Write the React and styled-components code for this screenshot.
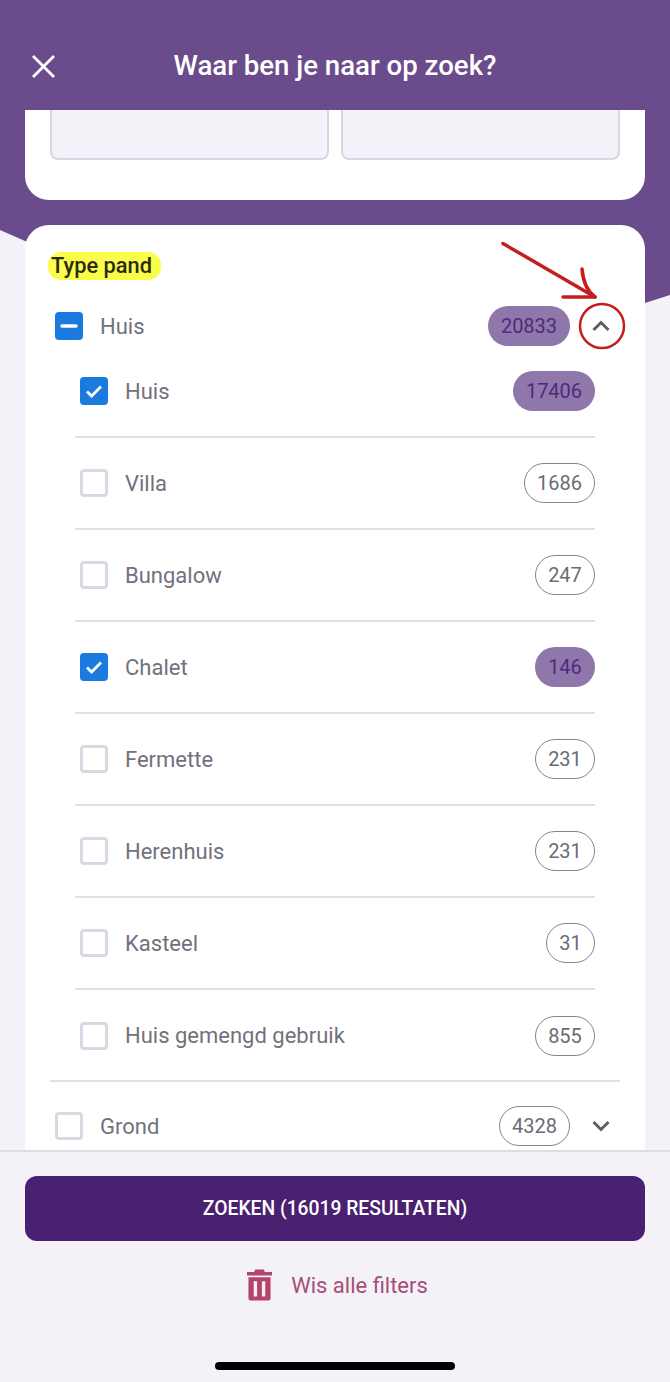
import React from "react";
import styled, { createGlobalStyle } from "styled-components";

const GlobalStyle = createGlobalStyle`
  html, body {
    margin: 0;
    padding: 0;
    background: #f4f1f8;
  }
  * {
    box-sizing: border-box;
  }
`;

const Screen = styled.div`
  width: 670px;
  height: 1382px;
  display: flex;
  flex-direction: column;
  overflow: hidden;
  background: #f4f1f8;
  font-family: Roboto, "Liberation Sans", sans-serif;
`;

const Header = styled.header`
  height: 110px;
  flex: none;
  position: relative;
  display: flex;
  align-items: center;
  justify-content: center;
  padding-top: 21px;
  background: #6a4c8c;
`;

const CloseButton = styled.div`
  position: absolute;
  left: 30px;
  top: 53px;
  width: 27px;
  height: 27px;
  color: #fff;
`;

const Title = styled.h1`
  margin: 0;
  font-size: 27.6px;
  font-weight: 500;
  color: #fff;
`;

const Body = styled.main`
  height: 1040px;
  flex: none;
  position: relative;
  overflow: hidden;
  display: flex;
  flex-direction: column;
  gap: 25px;
  padding: 0 25px;
`;

const Backdrop = styled.div`
  position: absolute;
  inset: 0 0 auto 0;
  height: 200px;
  background: #6a4c8c;
  clip-path: polygon(0 0, 670px 0, 670px 185px, 645px 193px, 25px 131px, 0 120px);
`;

const TopCard = styled.section`
  position: relative;
  height: 90px;
  flex: none;
  display: flex;
  gap: 12px;
  padding: 0 25px 40px;
  background: #fff;
  border-radius: 0 0 24px 24px;
`;

const RangeInput = styled.div`
  flex: 1;
  background: #f4f1f8;
  border: 2px solid #d9d6e3;
  border-top: none;
  border-radius: 0 0 8px 8px;
`;

const FilterCard = styled.section`
  position: relative;
  flex: none;
  height: 960px;
  padding: 27px 25px 0;
  background: #fff;
  border-radius: 24px 24px 0 0;
`;

const SectionTitle = styled.h2`
  display: inline-block;
  margin: 0 0 26px -2px;
  padding: 0 9px 0 3px;
  height: 28px;
  line-height: 28px;
  font-size: 21.8px;
  font-weight: 500;
  color: #2c2a10;
  background: #fbfd4b;
  border-radius: 13px;
`;

const ParentRow = styled.div`
  height: 40px;
  display: flex;
  align-items: center;
  padding-left: 5px;
`;

const SubList = styled.div`
  margin: 0 25px;
`;

const SubRow = styled.div`
  height: ${(p) => (p.$last ? "91px" : "92px")};
  display: flex;
  align-items: center;
  padding-left: 5px;
  border-bottom: ${(p) => (p.$last ? "none" : "2px solid #e1dfe8")};
`;

const CheckBox = styled.span`
  width: 28px;
  height: 28px;
  flex: none;
  display: flex;
  align-items: center;
  justify-content: center;
  border-radius: 4px;
  border: ${(p) => (p.$on ? "none" : "3px solid #dad8e2")};
  background: ${(p) => (p.$on ? "#1a7ade" : "#fff")};
`;

const Label = styled.span`
  flex: 1;
  margin-left: 17px;
  font-size: 22px;
  color: #72717b;
`;

const Count = styled.span`
  height: 40px;
  min-width: ${(p) => p.$width}px;
  display: flex;
  align-items: center;
  justify-content: center;
  border-radius: 20px;
  font-size: 20px;
  border: ${(p) => (p.$active ? "none" : "1.5px solid #85848c")};
  color: ${(p) => (p.$active ? "#4b2c7c" : "#6d6c75")};
  background: ${(p) => (p.$active ? "#8f76ab" : "#fff")};
`;

const Chevron = styled.span`
  position: relative;
  width: 24px;
  height: 24px;
  flex: none;
  margin: 0 7px 0 19px;
  color: #5f5e68;
`;

const Annotation = styled.svg`
  position: absolute;
  right: -26px;
  bottom: -13px;
  width: 140px;
  height: 110px;
  pointer-events: none;
`;

const Divider = styled.div`
  height: 2px;
  margin-top: -1px;
  background: #e1dfe8;
`;

const GroundRow = styled(ParentRow)`
  margin-top: 24px;
`;

const Footer = styled.footer`
  flex: 1;
  position: relative;
  z-index: 1;
  display: flex;
  flex-direction: column;
  align-items: center;
  padding: 24px 25px 0;
  background: #f4f1f8;
  border-top: 2px solid #dedce5;
`;

const SearchButton = styled.button`
  width: 620px;
  height: 65px;
  flex: none;
  border: none;
  border-radius: 12px;
  background: #4a2070;
  color: #fff;
  font-family: inherit;
  font-size: 19.3px;
  font-weight: 500;
`;

const ClearFilters = styled.div`
  margin: 28px 0 0 5px;
  display: flex;
  align-items: center;
  gap: 19px;
  font-size: 22px;
  color: #a54f77;
`;

const HomeBar = styled.div`
  position: absolute;
  left: 215px;
  bottom: 12px;
  width: 240px;
  height: 8px;
  border-radius: 4px;
  background: #000;
`;

const CheckMark = () => (
  <svg width="20" height="20" viewBox="0 0 20 20" fill="none">
    <path d="M3 10.5l4.6 4.5L17 5.5" stroke="#fff" strokeWidth="2.8" />
  </svg>
);

const MinusMark = () => (
  <svg width="20" height="20" viewBox="0 0 20 20" fill="none">
    <path d="M3 10h14" stroke="#fff" strokeWidth="3.4" strokeLinecap="round" />
  </svg>
);

const ChevronIcon = ({ up }) => (
  <svg width="24" height="24" viewBox="0 0 24 24" fill="none">
    <path
      d={up ? "M4.5 16l7.500-7.500 7.500 7.500" : "M4.500 8l7.500 7.500L19.500 8"}
      stroke="currentColor"
      strokeWidth="3"
    />
  </svg>
);

const TrashIcon = () => (
  <svg width="25" height="32" viewBox="0 0 26 32" fill="#b5446a">
    <path d="M8.5 0h9l1 2.500H26v3.500H0V2.500h7.500z" />
    <path d="M1.500 8h23v22a2 2 0 0 1-2 2h-19a2 2 0 0 1-2-2zM7 12v16h3.500V12zM15.500 12v16H19V12z" fillRule="evenodd" />
  </svg>
);

const subTypes = [
  { label: "Huis", count: 17406, width: 82, on: true },
  { label: "Villa", count: 1686, width: 71 },
  { label: "Bungalow", count: 247, width: 60 },
  { label: "Chalet", count: 146, width: 60, on: true },
  { label: "Fermette", count: 231, width: 60 },
  { label: "Herenhuis", count: 231, width: 60 },
  { label: "Kasteel", count: 31, width: 49 },
  { label: "Huis gemengd gebruik", count: 855, width: 60 },
];

const App = () => {
  return (
    <Screen>
      <GlobalStyle />
      <Header>
        <CloseButton>
          <svg width="27" height="27" viewBox="0 0 27 27" fill="none">
            <path d="M3 3l21 21M24 3L3 24" stroke="currentColor" strokeWidth="2.8" />
          </svg>
        </CloseButton>
        <Title>Waar ben je naar op zoek?</Title>
      </Header>
      <Body>
        <Backdrop />
        <TopCard>
          <RangeInput />
          <RangeInput />
        </TopCard>
        <FilterCard>
          <SectionTitle>Type pand</SectionTitle>
          <ParentRow>
            <CheckBox $on>
              <MinusMark />
            </CheckBox>
            <Label>Huis</Label>
            <Count $active $width={82}>20833</Count>
            <Chevron>
              <ChevronIcon up />
              <Annotation viewBox="0 0 140 110" fill="none">
                <g stroke="#c21f1e" strokeLinecap="round">
                  <path d="M4 2.500L96 56" strokeWidth="3.500" />
                  <path d="M83 28c1 12 5 22 13 28M64 56l32 0" strokeWidth="3.500" />
                  <ellipse cx="103" cy="85" rx="22" ry="22" strokeWidth="2.500" />
                </g>
              </Annotation>
            </Chevron>
          </ParentRow>
          <SubList>
            {subTypes.map((item, i) => (
              <SubRow key={item.label} $last={i === subTypes.length - 1}>
                <CheckBox $on={item.on}>{item.on && <CheckMark />}</CheckBox>
                <Label>{item.label}</Label>
                <Count $active={item.on} $width={item.width}>{item.count}</Count>
              </SubRow>
            ))}
          </SubList>
          <Divider />
          <GroundRow>
            <CheckBox />
            <Label>Grond</Label>
            <Count $width={71}>4328</Count>
            <Chevron>
              <ChevronIcon />
            </Chevron>
          </GroundRow>
        </FilterCard>
      </Body>
      <Footer>
        <SearchButton>ZOEKEN (16019 RESULTATEN)</SearchButton>
        <ClearFilters>
          <TrashIcon />
          Wis alle filters
        </ClearFilters>
        <HomeBar />
      </Footer>
    </Screen>
  );
};

export default App;
